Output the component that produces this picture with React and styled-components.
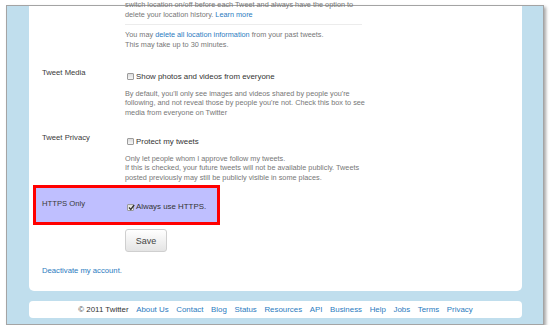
import React from 'react';
import styled, { createGlobalStyle } from 'styled-components';

const GlobalStyle = createGlobalStyle`
  html, body {
    margin: 0;
    padding: 0;
    background: #fff;
    overflow: hidden;
  }
  body {
    font-family: "Liberation Sans", Arial, sans-serif;
    color: #333;
  }
`;

const Frame = styled.div`
  margin: 5px 0 0 6px;
  width: 538px;
  height: 320px;
  box-sizing: border-box;
  display: flex;
  flex-direction: column;
  padding: 0 21px 0 22px;
  background: #c0deed;
  border: 1px solid #a4a4a4;
  box-shadow: 2px 2px 3px rgba(0, 0, 0, 0.35);
`;

const Panel = styled.div`
  background: #fff;
  border-radius: 0 0 5px 5px;
  padding: 0 0 15px 13px;
`;

const Row = styled.div`
  display: grid;
  grid-template-columns: 83px 1fr;
  margin-top: ${p => p.$top || 0}px;
  ${p => p.$highlight && `
    width: 187px;
    box-sizing: border-box;
    margin-left: -9px;
    padding: 10.5px 0 10px 6px;
    background: #bfbfff;
    border: 3px solid #ff0000;
  `}
`;

const Label = styled.div`
  font-size: 7.7px;
  line-height: 10px;
  color: #3a3a3a;
  white-space: nowrap;
`;

const Content = styled.div`
  padding-top: 3.5px;
`;

const Note = styled.p`
  margin: ${p => p.$top || 0}px 0 0;
  font-size: 7.3px;
  line-height: 9.5px;
  color: #777;
  white-space: nowrap;
`;

const Divider = styled.div`
  width: 237px;
  height: 1px;
  background: #ececec;
  margin-top: 5px;
`;

const Link = styled.a`
  color: #2b7bc0;
  text-decoration: none;
`;

const CheckLine = styled.label`
  display: flex;
  align-items: center;
  font-size: 7.9px;
  line-height: 10px;
  color: #333;
  white-space: nowrap;
`;

const Box = styled.span`
  position: relative;
  width: 7px;
  height: 7px;
  box-sizing: border-box;
  margin: 0 2px 0 2px;
  border: 1px solid #9c9c9c;
  border-radius: 1px;
  background: linear-gradient(#dcdcdc, #f7f7f7);
  svg {
    position: absolute;
    left: 0;
    top: -1px;
  }
`;

const Checkbox = ({ checked }) => (
  <Box>
    {checked && (
      <svg width="7" height="7" viewBox="0 0 7 7">
        <path d="M1 3.5 L2.8 5.4 L6.2 1" fill="none" stroke="#333" strokeWidth="1.3" />
      </svg>
    )}
  </Box>
);

const Actions = styled.div`
  margin: 4px 0 0 83px;
`;

const SaveButton = styled.button`
  width: 42px;
  height: 23px;
  padding: 0;
  font-family: "Liberation Sans", Arial, sans-serif;
  font-size: 9px;
  color: #444;
  border: 1px solid #cfcfcf;
  border-radius: 3px;
  background: linear-gradient(#ffffff, #e4e4e4);
`;

const Deactivate = styled.div`
  margin-top: 14px;
  font-size: 7.7px;
  line-height: 10px;
`;

const Footer = styled.div`
  margin-top: 10px;
  height: 17px;
  background: #fff;
  border-radius: 4px;
  display: flex;
  justify-content: center;
  align-items: center;
  gap: 7.6px;
  font-size: 7.9px;
  white-space: nowrap;
`;

const Copy = styled.span`
  color: #333;
`;

const footerLinks = ['About Us', 'Contact', 'Blog', 'Status', 'Resources', 'API', 'Business', 'Help', 'Jobs', 'Terms', 'Privacy'];

const App = () => {
  return (
    <>
      <GlobalStyle />
      <Frame>
        <Panel>
          <Row>
            <Label />
            <div>
              <Note $top={-6}>
                switch location on/off before each Tweet and always have the option to<br />
                delete your location history. <Link href="#">Learn more</Link>
              </Note>
              <Divider />
              <Note $top={5.25}>
                You may <Link href="#">delete all location information</Link> from your past tweets.<br />
                This may take up to 30 minutes.
              </Note>
            </div>
          </Row>

          <Row $top={19}>
            <Label>Tweet Media</Label>
            <Content>
              <CheckLine><Checkbox />Show photos and videos from everyone</CheckLine>
              <Note $top={7}>
                By default, you'll only see images and videos shared by people you're<br />
                following, and not reveal those by people you're not. Check this box to see<br />
                media from everyone on Twitter
              </Note>
            </Content>
          </Row>

          <Row $top={16}>
            <Label>Tweet Privacy</Label>
            <Content>
              <CheckLine><Checkbox />Protect my tweets</CheckLine>
              <Note $top={7}>
                Only let people whom I approve follow my tweets.<br />
                If this is checked, your future tweets will not be available publicly. Tweets<br />
                posted previously may still be publicly visible in some places.
              </Note>
            </Content>
          </Row>

          <Row $top={3} $highlight>
            <Label>HTTPS Only</Label>
            <Content>
              <CheckLine><Checkbox checked />Always use HTTPS.</CheckLine>
            </Content>
          </Row>

          <Actions>
            <SaveButton>Save</SaveButton>
          </Actions>

          <Deactivate>
            <Link href="#">Deactivate my account.</Link>
          </Deactivate>
        </Panel>

        <Footer>
          <Copy>© 2011 Twitter</Copy>
          {footerLinks.map(item => (
            <Link href="#" key={item}>{item}</Link>
          ))}
        </Footer>
      </Frame>
    </>
  );
};

export default App;
